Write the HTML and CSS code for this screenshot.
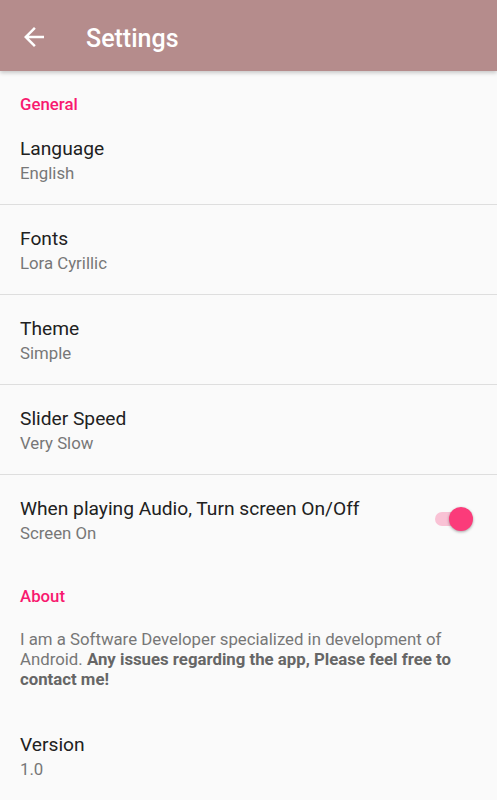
FILE: index.html
```html
<!DOCTYPE html>
<html lang="en">
<head>
  <meta charset="UTF-8">
  <meta name="viewport" content="width=device-width, initial-scale=1">
  <title>Settings</title>
  <link rel="stylesheet" href="styles.css">
</head>
<body>

  <div class="toolbar">
    <svg class="back" viewBox="0 0 24 24" width="30" height="30">
      <path d="M20 11H7.83l5.59-5.59L12 4l-8 8 8 8 1.41-1.41L7.83 13H20v-2z" fill="#fff"/>
    </svg>
    <h1>Settings</h1>
  </div>

  <!-- General -->
  <div class="category">General</div>

  <div class="pref">
    <div class="pref-text">
      <div class="title">Language</div>
      <div class="summary">English</div>
    </div>
  </div>

  <div class="pref">
    <div class="pref-text">
      <div class="title">Fonts</div>
      <div class="summary">Lora Cyrillic</div>
    </div>
  </div>

  <div class="pref">
    <div class="pref-text">
      <div class="title">Theme</div>
      <div class="summary">Simple</div>
    </div>
  </div>

  <div class="pref">
    <div class="pref-text">
      <div class="title">Slider Speed</div>
      <div class="summary">Very Slow</div>
    </div>
  </div>

  <div class="pref last">
    <div class="pref-text">
      <div class="title">When playing Audio, Turn screen On/Off</div>
      <div class="summary">Screen On</div>
    </div>
    <div class="switch on">
      <div class="track"></div>
      <div class="thumb"></div>
    </div>
  </div>

  <!-- About -->
  <div class="category">About</div>

  <p class="about">I am a Software Developer specialized in development of Android. <b>Any issues regarding the app, Please feel free to contact me!</b></p>

  <div class="pref">
    <div class="pref-text">
      <div class="title">Version</div>
      <div class="summary">1.0</div>
    </div>
  </div>

</body>
</html>
```

FILE: styles.css
```css
body {
  margin: 0;
  font-family: Roboto, "Liberation Sans", sans-serif;
  background-color: #fafafa;
}

.toolbar {
  display: flex;
  align-items: center;
  box-sizing: border-box;
  height: 71px;
  padding: 6px 0 0 19px;
  background-color: #b58c8c;
  box-shadow: 0 2px 4px rgba(0, 0, 0, 0.2);
  position: relative;
}

.toolbar h1 {
  margin: 0 0 0 37px;
  font-size: 25px;
  font-weight: 500;
  color: white;
}

.back {
  display: block;
  margin-top: -3px;
}

.category {
  padding: 23px 20px 1px;
  font-size: 16.8px;
  line-height: 20px;
  font-weight: 500;
  color: #f8196f;
}

.pref {
  display: flex;
  align-items: center;
  padding: 22px 24px 21px 20px;
  border-bottom: 1px solid #dedede;
}

.pref.last {
  padding-bottom: 20px;
  border-bottom: none;
}

.pref-text {
  flex: 1;
}

.title {
  font-size: 19.2px;
  line-height: 24px;
  color: #212121;
}

.summary {
  margin-top: 2px;
  font-size: 16.8px;
  line-height: 20px;
  color: #777;
}

.switch {
  position: relative;
  width: 38px;
  height: 24px;
  margin-top: -2px;
}

.track {
  position: absolute;
  left: 0;
  top: 5px;
  width: 36px;
  height: 14px;
  border-radius: 7px;
  background-color: #f9c2d5;
}

.thumb {
  position: absolute;
  right: 0;
  top: 0;
  width: 24px;
  height: 24px;
  border-radius: 50%;
  background-color: #fb3b7a;
  box-shadow: 0 1px 3px rgba(0, 0, 0, 0.35);
}

.about {
  margin: 0;
  padding: 22px 20px 22px;
  font-size: 16.8px;
  line-height: 20px;
  color: #777;
}

.about b {
  color: #666;
}
```
